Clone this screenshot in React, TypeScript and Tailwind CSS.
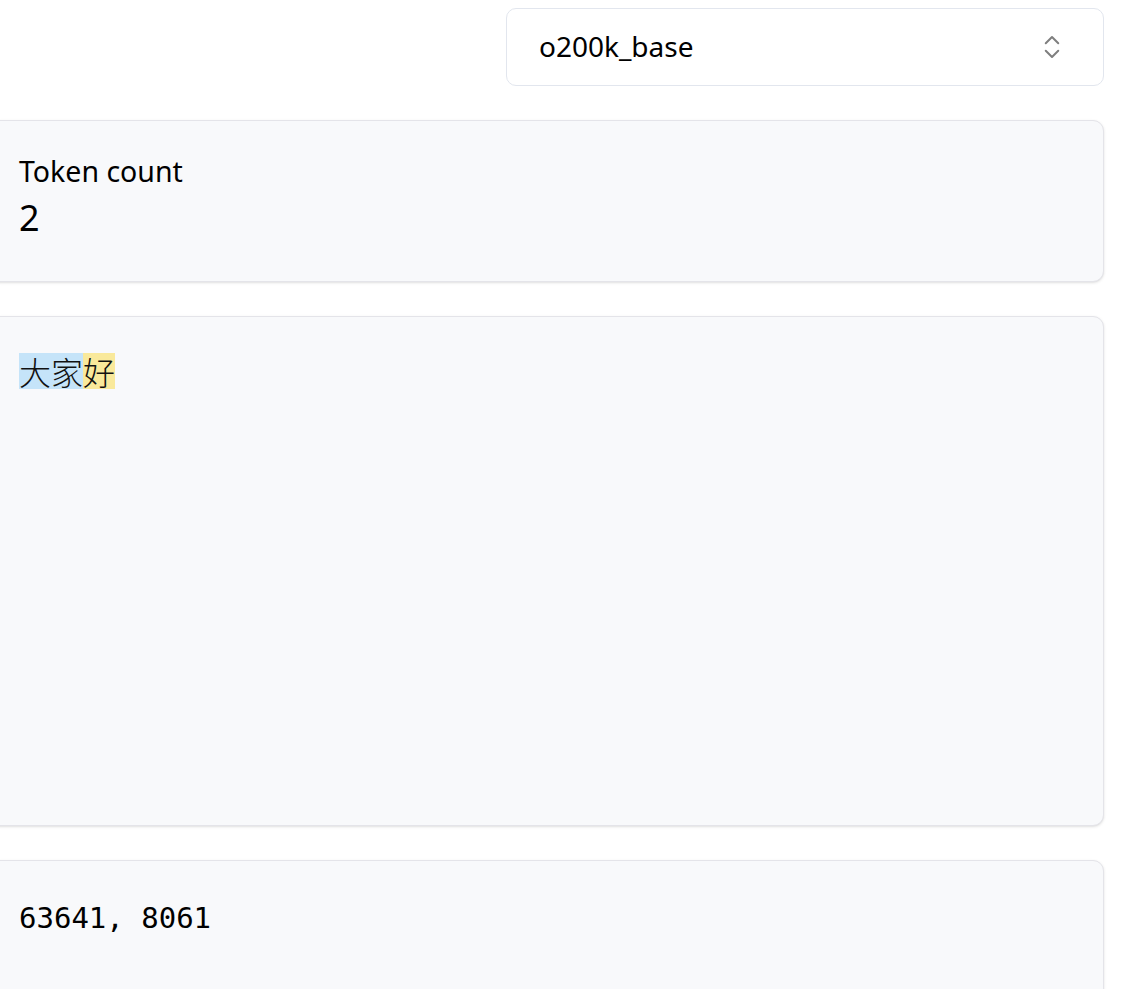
import { ChevronsUpDown } from 'lucide-react';

const sans = { fontFamily: '"Noto Sans", "Noto Sans CJK SC", sans-serif' };

const tokens = [
  { text: '大家', color: 'bg-[#c5e4f9]' },
  { text: '好', color: 'bg-[#f9e99b]' },
];

export default function App() {
  return (
    <div className="min-h-screen overflow-hidden bg-white text-black font-['Noto_Sans',sans-serif]">
      <div className="-ml-[11px] mr-[39px] pt-2 flex flex-col gap-[34px]">
        <div className="flex justify-end">
          <div className="w-[598px] h-[78px] flex items-center justify-between rounded-[10px] border border-[#e2e6ee] bg-white pl-[32px] pr-[36px]">
            <span className="text-[28px] -mt-[2px]" style={sans}>o200k_base</span>
            <ChevronsUpDown className="w-[30px] h-[30px] text-[#7f7f7f]" strokeWidth={1.6} />
          </div>
        </div>

        <div className="h-[162px] rounded-[11px] border border-[#e4e4e9] bg-[#f8f9fb] shadow-sm pl-[29px] pt-[31px]">
          <div className="text-[28.5px] leading-[38px]">Token count</div>
          <div className="text-[36px] leading-[47px] mt-[4px]">2</div>
        </div>

        <div className="h-[510px] rounded-[11px] border border-[#e4e4e9] bg-[#f8f9fb] shadow-sm pl-[29px] pt-[36px]">
          <div className="flex font-['Noto_Sans_CJK_SC',sans-serif] text-[32px] font-light text-[#111]">
            {tokens.map((t) => (
              <span key={t.text} className={`${t.color} inline-block h-[36px] leading-[36px]`}>
                {t.text}
              </span>
            ))}
          </div>
        </div>

        <div className="h-[140px] rounded-[11px] border border-[#e4e4e9] bg-[#f8f9fb] shadow-sm pl-[29px] pt-[36px]">
          <div className="font-['DejaVu_Sans_Mono',monospace] text-[29px]">63641, 8061</div>
        </div>
      </div>
    </div>
  );
}
